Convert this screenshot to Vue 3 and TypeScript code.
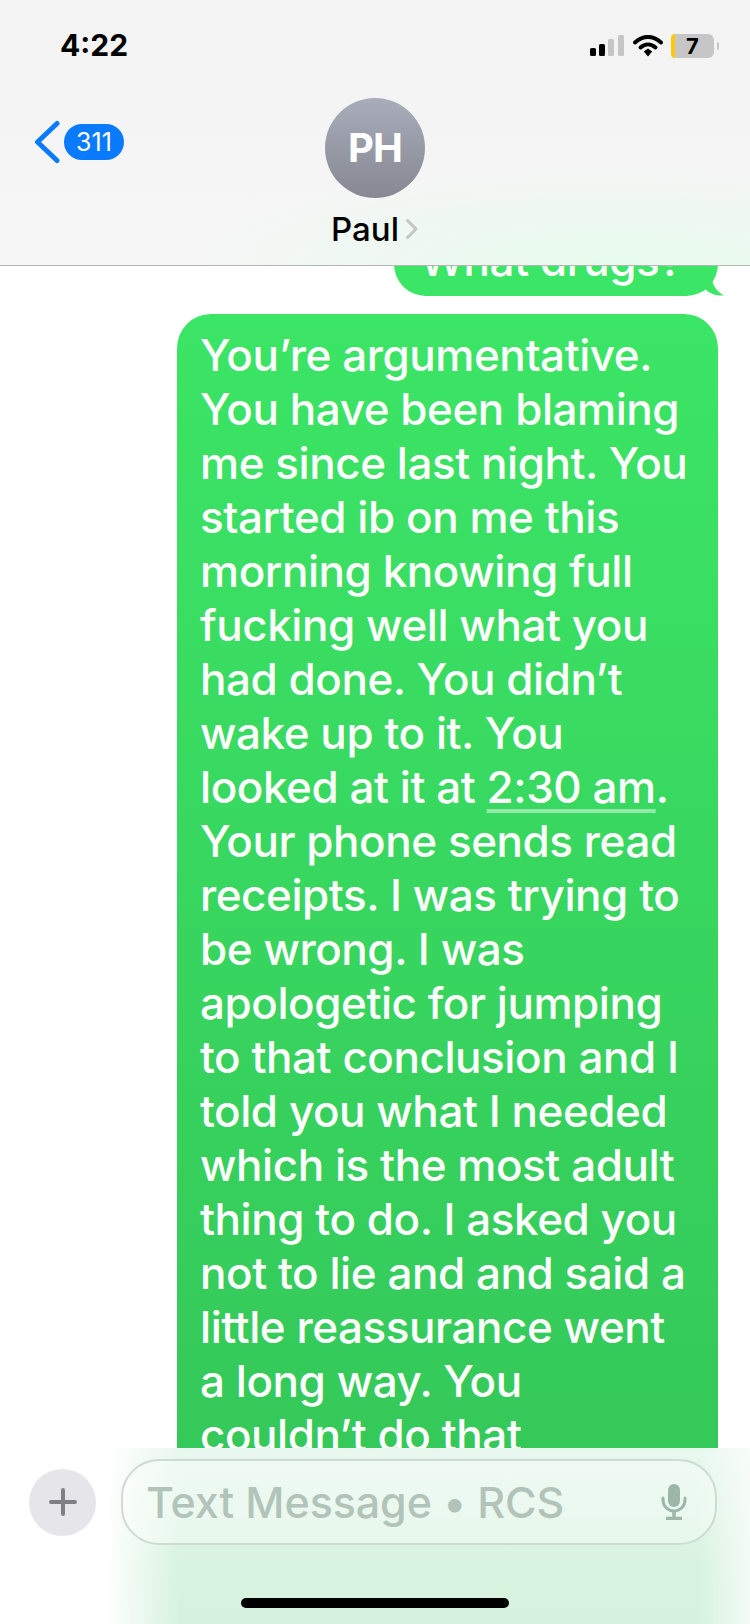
<template>
  <div class="screen">
    <!-- 顶部导航 -->
    <header class="nav">
      <div class="status">
        <span class="time">4:22</span>
        <div class="status-icons">
          <svg class="signal" width="34" height="21" viewBox="0 0 34 21">
            <rect x="0" y="13" width="6" height="8" rx="1.5" fill="#000" />
            <rect x="9" y="9" width="6" height="12" rx="1.5" fill="#000" />
            <rect x="18" y="4" width="6" height="17" rx="1.5" fill="#c6c6c6" />
            <rect x="28" y="0" width="6" height="21" rx="1.5" fill="#c6c6c6" />
          </svg>
          <svg class="wifi" width="30" height="22" viewBox="0 0 30 22">
            <path d="M2 7.5C10 0 20 0 28 7.5" fill="none" stroke="#000" stroke-width="4" stroke-linecap="round" />
            <path d="M7.5 12.5C12 8.5 18 8.5 22.5 12.5" fill="none" stroke="#000" stroke-width="4" stroke-linecap="round" />
            <path d="M10.8 16.5L15 13.4L19.2 16.5L15 21.5Z" fill="#000" />
          </svg>
          <div class="battery">
            <span class="battery-level"></span>
            <span class="battery-num">7</span>
          </div>
          <span class="battery-nub"></span>
        </div>
      </div>

      <div class="nav-row">
        <div class="back">
          <svg width="26" height="44" viewBox="0 0 26 44">
            <path d="M23 3.500L3.500 22L23 40.500" fill="none" stroke="#0a7aff" stroke-width="5" stroke-linecap="round" stroke-linejoin="round" />
          </svg>
          <span class="badge">311</span>
        </div>
        <div class="contact">
          <div class="avatar">PH</div>
          <div class="name">
            Paul
            <svg width="14" height="22" viewBox="0 0 14 22">
              <path d="M2.500 2.500L11 11L2.500 19.500" fill="none" stroke="#c3c7c4" stroke-width="3" stroke-linecap="round" stroke-linejoin="round" />
            </svg>
          </div>
        </div>
      </div>
    </header>

    <!-- 消息列表 -->
    <main class="thread">
      <div class="bubble-small">
        What drugs?
        <svg class="tail" width="22" height="24" viewBox="0 0 22 24">
          <path d="M0 0H8C8 10 12 19 21 23.500C14 24 7 22 2 17Z" fill="#3be565" />
        </svg>
      </div>
      <div class="bubble">
        <div v-for="line in lines" :key="line" class="line">
          <template v-if="line.includes(linkText)">
            {{ line.split(linkText)[0] }}<span class="link">{{ linkText }}</span>.
          </template>
          <template v-else>{{ line }}</template>
        </div>
      </div>
    </main>

    <!-- 底部输入栏 -->
    <footer class="composer">
      <div class="input-row">
        <div class="plus">
          <svg width="28" height="28" viewBox="0 0 28 28">
            <path d="M14 2V26M2 14H26" stroke="#7f8085" stroke-width="4" stroke-linecap="round" />
          </svg>
        </div>
        <div class="input">
          <span class="placeholder">Text Message • RCS</span>
          <svg width="26" height="36" viewBox="0 0 26 36">
            <rect x="7" y="0" width="12" height="23" rx="6" fill="#9cb6a8" />
            <path d="M2 14V16C2 22 7 27 13 27C19 27 24 22 24 16V14" fill="none" stroke="#9cb6a8" stroke-width="3" stroke-linecap="round" />
            <path d="M13 27V33M5 34.500H21" stroke="#9cb6a8" stroke-width="3.500" />
          </svg>
        </div>
      </div>
      <div class="home-bar"></div>
    </footer>
  </div>
</template>

<script setup lang="ts">
const linkText = '2:30 am'

const lines: string[] = [
  'You’re argumentative.',
  'You have been blaming',
  'me since last night. You',
  'started ib on me this',
  'morning knowing full',
  'fucking well what you',
  'had done. You didn’t',
  'wake up to it. You',
  'looked at it at 2:30 am.',
  'Your phone sends read',
  'receipts. I was trying to',
  'be wrong. I was',
  'apologetic for jumping',
  'to that conclusion and I',
  'told you what I needed',
  'which is the most adult',
  'thing to do. I asked you',
  'not to lie and and said a',
  'little reassurance went',
  'a long way. You',
  'couldn’t do that'
]
</script>

<style>
html,
body {
  margin: 0;
  background: #fff;
}
</style>

<style scoped>
.screen {
  position: relative;
  width: 750px;
  height: 1624px;
  display: flex;
  flex-direction: column;
  overflow: hidden;
  background: #fff;
  font-family: Inter, "Liberation Sans", sans-serif;
  color: #000;
}

.nav {
  position: relative;
  z-index: 2;
  height: 266px;
  flex: none;
  box-sizing: border-box;
  border-bottom: 1px solid #b4b4b4;
  background:
    radial-gradient(ellipse 440px 100px at 82% 100%, #e6fbec 0%, rgba(230, 251, 236, 0) 100%),
    linear-gradient(180deg, #f3f3f3, #f6f6f6);
}

.status {
  height: 33px;
  padding: 29px 31px 0 60px;
  display: flex;
  align-items: center;
  justify-content: space-between;
}

.time {
  font-size: 30px;
  font-weight: 700;
  line-height: 33px;
}

.status-icons {
  display: flex;
  align-items: center;
}

.wifi {
  margin-left: 9px;
}

.battery {
  position: relative;
  width: 43px;
  height: 24px;
  margin-left: 8px;
  border-radius: 6px;
  background: #c6c6c6;
  text-align: center;
  font-size: 22px;
  font-weight: 700;
  line-height: 24px;
}

.battery-level {
  position: absolute;
  left: 0;
  top: 0;
  bottom: 0;
  width: 4px;
  border-radius: 6px 0 0 6px;
  background: #ffc80a;
}

.battery-num {
  position: relative;
}

.battery-nub {
  width: 2px;
  height: 8px;
  margin-left: 3px;
  border-radius: 0 2px 2px 0;
  background: #c6c6c6;
}

.nav-row {
  position: relative;
  display: flex;
  justify-content: center;
  padding-top: 36px;
}

.back {
  position: absolute;
  left: 34px;
  top: 58px;
  display: flex;
  align-items: center;
  gap: 4px;
}

.badge {
  width: 60px;
  height: 36px;
  border-radius: 18px;
  background: #0a7aff;
  color: #fff;
  font-size: 25px;
  line-height: 36px;
  text-align: center;
}

.contact {
  display: flex;
  flex-direction: column;
  align-items: center;
}

.avatar {
  width: 100px;
  height: 100px;
  border-radius: 50%;
  background: linear-gradient(180deg, #a8adba, #868892);
  color: #fff;
  font-size: 40px;
  font-weight: 700;
  letter-spacing: -1px;
  line-height: 100px;
  text-align: center;
}

.name {
  display: flex;
  align-items: center;
  gap: 6px;
  margin-top: 13px;
  font-size: 33px;
  font-weight: 500;
  line-height: 36px;
}

.thread {
  flex: 1;
  min-height: 0;
  display: flex;
  flex-direction: column;
  align-items: flex-end;
  gap: 18px;
  padding-right: 32px;
  margin-top: -33px;
}

.bubble-small {
  position: relative;
  flex: none;
  width: 324px;
  height: 63px;
  box-sizing: border-box;
  padding-right: 10px;
  border-radius: 0 0 32px 32px;
  background: #3be565;
  color: #fff;
  font-size: 44px;
  font-weight: 500;
  letter-spacing: -0.45px;
  line-height: 54px;
  text-align: center;
}

.tail {
  position: absolute;
  right: -7px;
  bottom: 0;
}

.bubble {
  flex: none;
  width: 541px;
  height: 1200px;
  box-sizing: border-box;
  padding: 14px 0 0 23px;
  border-radius: 34px 34px 0 0;
  background: linear-gradient(180deg, #3be565 0%, #34c759 100%);
  color: #fff;
  font-size: 44px;
  font-weight: 500;
  letter-spacing: -0.45px;
  line-height: 54px;
}

.line {
  white-space: nowrap;
}

.link {
  text-decoration: underline;
  text-decoration-color: rgba(255, 255, 255, 0.45);
  text-decoration-thickness: 4px;
  text-underline-offset: 6px;
}

.composer {
  position: absolute;
  left: 0;
  top: 1448px;
  width: 750px;
  height: 176px;
  background:
    linear-gradient(90deg, #fff 0%, #fff 14%, rgba(255, 255, 255, 0) 24%, rgba(255, 255, 255, 0) 93%, rgba(255, 255, 255, 0.7) 100%),
    linear-gradient(180deg, #e9f8ee 0%, #d8f3df 65%, #d6f2de 100%);
}

.input-row {
  display: flex;
  align-items: center;
  gap: 25px;
  padding: 11px 33px 0 29px;
}

.plus {
  width: 67px;
  height: 67px;
  flex: none;
  display: flex;
  align-items: center;
  justify-content: center;
  border-radius: 50%;
  background: #e5e5ea;
}

.input {
  flex: 1;
  height: 86px;
  box-sizing: border-box;
  display: flex;
  align-items: center;
  justify-content: space-between;
  padding: 0 28px 0 23px;
  border: 2px solid #ccdcd1;
  border-radius: 38px;
  background: rgba(255, 255, 255, 0.35);
}

.placeholder {
  color: #b2c4b9;
  font-size: 43px;
  font-weight: 500;
  letter-spacing: -0.1px;
}

.home-bar {
  width: 268px;
  height: 10px;
  margin: 53px auto 0;
  border-radius: 5px;
  background: #000;
}
</style>
